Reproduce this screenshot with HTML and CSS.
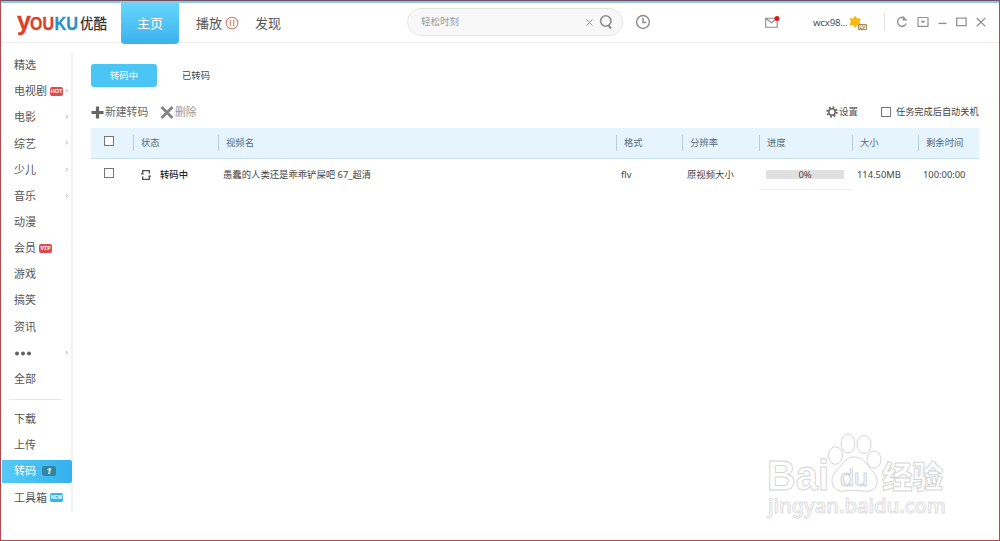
FILE: index.html
```html
<!DOCTYPE html>
<html lang="zh-CN">
<head>
<meta charset="utf-8">
<title>优酷</title>
<link rel="stylesheet" href="styles.css">
</head>
<body>
<div class="window">
  <header class="header">
    <svg class="logo" width="100" height="36" viewBox="0 0 100 36">
      <g class="logo-latin">
        <text class="logo-red" x="0" y="21" font-size="25">y</text>
        <text class="logo-red" x="13" y="21" font-size="18.5" textLength="24" lengthAdjust="spacingAndGlyphs">OU</text>
        <text class="logo-blue" x="37.5" y="21" font-size="18.5" textLength="23.5" lengthAdjust="spacingAndGlyphs">KU</text>
      </g>
      <text class="logo-cn" x="63" y="20" textLength="27" lengthAdjust="spacingAndGlyphs">优酷</text>
    </svg>
    <nav class="nav">
      <a class="nav-home">主页</a>
      <a class="nav-play">播放
        <svg width="14" height="14" viewBox="0 0 14 14" fill="none" stroke="#d97b66" stroke-width="1.1"><circle cx="7" cy="7" r="5.8"/><path d="M5.3 4v6M8.7 4v6"/></svg>
      </a>
      <a class="nav-find">发现</a>
    </nav>
    <div class="search">
      <span class="search-text">轻松时刻</span>
      <svg width="9" height="9" viewBox="0 0 9 9" stroke="#7f9696" stroke-width="1"><path d="M1.5 1.5l6 6M7.5 1.5l-6 6"/></svg>
      <svg class="search-icon" width="15" height="16" viewBox="0 0 15 16" fill="none" stroke="#8e8e8e" stroke-width="1.6"><circle cx="6.8" cy="7" r="5.2"/><path d="M9.6 11l2.3 3.8" stroke-width="2.2"/></svg>
    </div>
    <svg class="history" width="16" height="16" viewBox="0 0 16 16" fill="none" stroke="#8e8e8e" stroke-width="1.5"><circle cx="8" cy="8" r="6.4"/><path d="M8 4v4.6h3.3"/></svg>
    <svg class="mail" width="15" height="14" viewBox="0 0 15 14"><path d="M.7 3.2h11.5v9H.7zM1 3.5l5.5 4.3L12 3.5" fill="none" stroke="#8a8a8a" stroke-width="1.1"/><circle cx="12" cy="3.5" r="2.5" fill="#e0161c"/></svg>
    <span class="user">wcx98...</span>
    <svg class="badge" width="19" height="16" viewBox="0 0 19 16"><path d="M6.2 1.7l1.8 2.5 3.1-.3-1.3 2.9 1.3 3-3.2-.2-1.7 2.6-1.8-2.6-3.2.2 1.4-3-1.4-2.9 3.2.3z" fill="#f8b912" stroke="#f8b912" stroke-width="1.2" stroke-linejoin="round"/><path d="M9.5 9.5h8v5h-8z" fill="#f5ecd3" stroke="#a88e55"/><text x="10.6" y="13.9" font-size="5">LV</text></svg>
    <div class="controls">
      <svg width="12" height="12" viewBox="0 0 12 12" fill="none" stroke="#929292" stroke-width="1.4"><path d="M8.5 2A4.5 4.5 0 1 0 10.2 7.5M7.3.5v3.2h3.5M8.5 1.3v2"/></svg>
      <svg width="12" height="12" viewBox="0 0 12 12"><path d="M1 1.5h10v8.8H1z" fill="none" stroke="#929292" stroke-width="1.2"/><path d="M3.8 4.7h4.4L6 7.3z" fill="#858585"/></svg>
      <svg width="9" height="12" viewBox="0 0 9 12"><path d="M.5 7.4h8" stroke="#929292" stroke-width="1.4"/></svg>
      <svg width="11" height="12" viewBox="0 0 11 12"><path d="M.7 2.2h9.4v7.4H.7z" fill="none" stroke="#929292" stroke-width="1.3"/></svg>
      <svg width="10" height="12" viewBox="0 0 10 12"><path d="M.8 2l8.4 8.2M9.2 2L.8 10.2" stroke="#929292" stroke-width="1.2"/></svg>
    </div>
  </header>
  <div class="body">
    <aside class="sidebar">
      <a class="item">精选</a>
      <a class="item more">电视剧<span class="tag hot">HOT</span></a>
      <a class="item more">电影</a>
      <a class="item more">综艺</a>
      <a class="item more">少儿</a>
      <a class="item more">音乐</a>
      <a class="item">动漫</a>
      <a class="item">会员<span class="tag vip">VIP</span></a>
      <a class="item">游戏</a>
      <a class="item">搞笑</a>
      <a class="item">资讯</a>
      <a class="item more"><svg width="18" height="6" viewBox="0 0 18 6" fill="#606060"><circle cx="3" cy="3.6" r="2"/><circle cx="9" cy="3.6" r="2"/><circle cx="15" cy="3.6" r="2"/></svg></a>
      <a class="item">全部</a>
      <hr class="rule">
      <a class="item">下载</a>
      <a class="item">上传</a>
      <a class="item active">转码<span class="count">1</span></a>
      <a class="item">工具箱<span class="tag new">NEW</span></a>
    </aside>
    <main class="main">
      <div class="tabs"><a class="tab tab-on">转码中</a><a class="tab">已转码</a></div>
      <div class="toolbar">
        <svg width="13" height="13" viewBox="0 0 13 13"><path d="M6.5.5v12M.5 6.5h12" stroke="#666" stroke-width="3.2"/></svg>
        <span class="tool-new">新建转码</span>
        <svg width="14" height="13" viewBox="0 0 14 13"><path d="M1.5 1l11 11M12.5 1l-11 11" stroke="#858585" stroke-width="2.9"/></svg>
        <span class="tool-del">删除</span>
        <svg class="gear" width="12" height="12" viewBox="0 0 12 12" fill="none" stroke="#666"><circle cx="6" cy="6" r="3.2" stroke-width="1.5"/><circle cx="6" cy="6" r="4.8" stroke-width="1.8" stroke-dasharray="1.8 1.97"/></svg>
        <span class="tool-set">设置</span>
        <i class="box"></i>
        <span class="tool-off">任务完成后自动关机</span>
      </div>
      <div class="grid head">
        <div class="check"><i class="box"></i></div>
        <div class="th">状态</div><div class="th">视频名</div><div class="th">格式</div><div class="th">分辨率</div><div class="th">进度</div><div class="th">大小</div><div class="th">剩余时间</div>
      </div>
      <div class="grid row">
        <div class="check"><i class="box"></i></div>
        <div class="status"><svg width="10" height="12" viewBox="0 0 10 12" fill="none" stroke="#4d4d4d" stroke-width="1.3"><path d="M1.7 4.8V1.7h6.6v2.8M8.3 7.2v3.1H1.7V7.5M0 4.8h2.6M7.4 7.2H10"/></svg><b>转码中</b></div>
        <div class="name">愚蠢的人类还是乖乖铲屎吧 67_超清</div>
        <div class="fmt">flv</div>
        <div class="res">原视频大小</div>
        <div class="prog"><span class="bar">0%</span></div>
        <div class="size">114.50MB</div>
        <div class="time">100:00:00</div>
      </div>
    </main>
  </div>
  <svg class="watermark" width="190" height="95" viewBox="0 0 190 95">
    <text class="wm-main" x="1" y="58" font-size="43" textLength="62" lengthAdjust="spacingAndGlyphs">Bai</text>
    <g class="wm-paw"><ellipse cx="69.5" cy="23.5" rx="7" ry="8.8"/><ellipse cx="82" cy="11.5" rx="6.8" ry="9.3"/><ellipse cx="98" cy="12.5" rx="7" ry="9"/><ellipse cx="108" cy="27.5" rx="7" ry="8.6"/><path d="M88 25c8 0 12 6 15 10 4 5 9 9 8 16-1 8-8 9-14 8-6-1-12-1-18 0-7 1-12-2-13-9-1-6 4-11 8-15 4-5 7-10 14-10z"/></g>
    <text class="wm-du" x="74" y="54" font-size="24" textLength="28" lengthAdjust="spacingAndGlyphs">du</text>
    <text class="wm-cn" x="116" y="56" textLength="61" lengthAdjust="spacingAndGlyphs">经验</text>
    <text class="wm-url" x="2" y="81" textLength="178" lengthAdjust="spacingAndGlyphs">jingyan.baidu.com</text>
  </svg>
</div>
</body>
</html>
```
FILE: styles.css
```css
* { box-sizing: border-box; }
body { margin: 0; background: #fff; color: #555; font: 10.8px/16px "Noto Sans", "Noto Sans CJK SC", sans-serif; }
svg { flex: none; display: block; }
.window { position: relative; width: 1000px; height: 541px; overflow: hidden; border: 1px solid #b34a50; border-top-color: #6f5064; }
.header { display: flex; align-items: flex-start; height: 42px; border-top: 2px solid #8cc8e3; border-bottom: 1px solid #eee; white-space: nowrap; }
.logo { margin: 6px 4px 0 16px; }
.logo-latin { font-family: "Liberation Sans", sans-serif; font-weight: 700; stroke-linejoin: round; stroke-width: .3; }
.logo-red { fill: #dc4028; stroke: #dc4028; }
.logo-blue { fill: #2791c9; stroke: #2791c9; }
.logo-cn { font: 500 14.5px "Noto Sans CJK SC", sans-serif; fill: #333; }
.nav { display: flex; font-size: 13px; height: 41px; }
.nav-home { width: 58px; height: 41px; line-height: 40px; text-align: center; color: #fff; background: linear-gradient(#65d6fb, #3db1ef); border-radius: 0 0 4px 4px; }
.nav-play { display: flex; align-items: center; gap: 3px; margin-left: 17px; width: 42px; height: 40px; }
.nav-find { margin-left: 17px; width: 26px; line-height: 40px; }
.search { display: flex; align-items: center; width: 216px; height: 28px; margin: 5px 0 0 126px; padding: 0 8px 0 13px; border: 1px solid #e9e4e6; border-radius: 14px; background: #f8f8f8; }
.search-text { flex: 1; font-size: 9.5px; color: #999; }
.search-icon { margin-left: 5px; }
.history { margin: 11px 0 0 12px; }
.mail { margin: 12px 0 0 114px; }
.user { width: 35px; margin: 12px 0 0 33px; font-size: 9.7px; line-height: 16px; letter-spacing: -.25px; color: #505050; }
.badge { margin: 12px 0 0 1px; }
.badge text { font-family: "Liberation Sans", sans-serif; fill: #7d6732; }
.controls { display: flex; gap: 9px; height: 18px; margin: 10px 0 0 16px; padding: 3px 0 0 11px; border-left: 1px solid #e2e2e2; }
.body { display: flex; }
.sidebar { width: 72px; height: 460px; margin-top: 9px; padding-left: 1px; border-right: 2px solid #f3f3f3; }
.item { position: relative; display: flex; align-items: center; height: 26.17px; padding-left: 12px; font-size: 11px; white-space: nowrap; }
.more::after { content: "›"; position: absolute; right: 3px; top: 4px; font-size: 9px; color: #aaa; }
.tag { margin-left: 3px; height: 9px; border-radius: 2px; color: #fff; font: 700 5.5px/9px "Liberation Sans", sans-serif; text-align: center; width: 13px; white-space: nowrap; }
.hot, .vip { background: #dc4b50; }
.vip { font-family: "Liberation Mono", monospace; }
.new { background: #38b5dd; font-size: 5px; }
.rule { width: 53px; margin: 7px 0 6px 7px; border: 0; border-top: 1px solid #e7e7e7; }
.active { height: 23px; margin: 1.5px -1px 1.67px 0; color: #fff; background: linear-gradient(90deg, #55c9f8, #35b1ef); border-radius: 0 2px 2px 0; }
.count { width: 14px; height: 10px; margin-left: 6px; border-radius: 2px; background: #3385a6; text-align: center; font: italic 700 9px/10px "Open Sans", sans-serif; }
.main { width: 888px; margin-left: 18px; padding-top: 21px; }
.tabs { display: flex; gap: 6px; height: 23px; }
.tab { width: 66px; line-height: 24px; text-align: center; font-size: 9.3px; color: #444; }
.tab-on { color: #fff; background: #4ac5f5; border-radius: 3px; }
.toolbar { display: flex; align-items: center; height: 26px; margin-top: 12px; font-size: 10.8px; white-space: nowrap; }
.tool-new { width: 44px; margin: 0 11px 0 1px; color: #666; }
.tool-del { margin-left: 1px; color: #999; }
.gear { margin-left: auto; }
.tool-set { width: 19px; margin: 0 23px 0 1px; font-size: 9.5px; }
.tool-off { width: 83px; margin-left: 5px; font-size: 9.2px; color: #444; }
.box { display: block; width: 10px; height: 10px; border: 1px solid #777; background: #fff; }
.grid { display: grid; grid-template-columns: 42px 85px 398px 66px 77px 93px 66px 61px; align-items: center; font-size: 9.35px; white-space: nowrap; }
.head { height: 31px; margin-top: 3px; background: #e6f4fd; border-bottom: 1px solid #c9dfe9; color: #566b78; }
.check { padding: 0 0 4px 13px; }
.th { height: 16px; line-height: 16px; padding-left: 7px; border-left: 1px solid #bccdd5; }
.row { height: 31px; color: #444; }
.status { display: flex; align-items: center; gap: 9px; padding-left: 8px; }
.status b { font-weight: 500; color: #222; }
.name { padding-left: 5px; }
.fmt, .res, .size, .time { padding-left: 5px; }
.prog { height: 31px; padding: 11px 8px 0 7px; border-bottom: 1px solid #eee; }
.bar { display: block; height: 9px; line-height: 9px; background: #e0e0e0; text-align: center; }
.watermark { position: absolute; left: 765px; top: 431px; fill: #fff; stroke: #d5d5d5; }
.wm-main { font-family: "Liberation Sans", sans-serif; font-weight: 700; }
.wm-du { font-family: "Liberation Sans", sans-serif; }
.wm-cn { font: 900 31px "Noto Sans CJK SC", sans-serif; }
.wm-url { font: 500 19px "Noto Sans", sans-serif; stroke: #e0e0e0; }
```
